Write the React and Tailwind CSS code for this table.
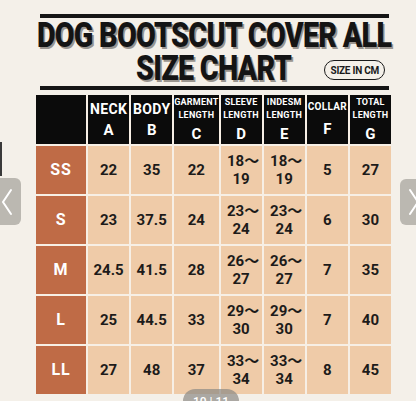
import React from "react";

const COLS = [
  { top: ["NECK"], big: true, letter: "A" },
  { top: ["BODY"], big: true, letter: "B" },
  { top: ["GARMENT", "LENGTH"], letter: "C" },
  { top: ["SLEEVE", "LENGTH"], letter: "D" },
  { top: ["INDESM", "LENGTH"], letter: "E" },
  { top: ["COLLAR"], mid: true, letter: "F" },
  { top: ["TOTAL", "LENGTH"], letter: "G" },
];

const ROWS = [
  { size: "SS", vals: ["22", "35", "22", ["18～", "19"], ["18～", "19"], "5", "27"] },
  { size: "S", vals: ["23", "37.5", "24", ["23～", "24"], ["23～", "24"], "6", "30"] },
  { size: "M", vals: ["24.5", "41.5", "28", ["26～", "27"], ["26～", "27"], "7", "35"] },
  { size: "L", vals: ["25", "44.5", "33", ["29～", "30"], ["29～", "30"], "7", "40"] },
  { size: "LL", vals: ["27", "48", "37", ["33～", "34"], ["33～", "34"], "8", "45"] },
];

const font = { fontFamily: "Roboto, 'Noto Sans CJK JP', sans-serif" };

const HeaderCell = ({ col }) => (
  <div className="bg-[#0b0b0b] text-white flex flex-col items-center justify-center font-bold leading-none">
    {col.big ? (
      <span className="text-[14px] tracking-wide">{col.top[0]}</span>
    ) : col.mid ? (
      <span className="text-[10px] tracking-wide mb-[3px]">{col.top[0]}</span>
    ) : (
      <div className="flex flex-col items-center gap-[4px] text-[9px] tracking-wide">
        {col.top.map((t) => (
          <span key={t}>{t}</span>
        ))}
      </div>
    )}
    <span className="text-[15px] mt-[7px]">{col.letter}</span>
  </div>
);

const ValueCell = ({ v }) => (
  <div className="bg-[#efcba8] text-[#1d1b1a] flex flex-col items-center justify-center font-bold text-[15px]">
    {Array.isArray(v) ? (
      <>
        <span className="leading-[18px] pl-[4px]">{v[0]}</span>
        <span className="leading-[18px]">{v[1]}</span>
      </>
    ) : (
      <span>{v}</span>
    )}
  </div>
);

export default function App() {
  return (
    <div className="relative w-[416px] h-[401px] overflow-hidden bg-[#f4f0e9]" style={font}>
      <div className="pl-[36px] pt-[14px] w-[392px] flex flex-col items-center">
        <div className="w-[349px] h-[4px] bg-[#151515]" />
        <div className="h-[34px] pt-[2px] flex items-center justify-center">
          <span className="inline-block text-[35px] leading-[30px] font-black tracking-tight text-[#141414] whitespace-nowrap scale-x-[0.82] [text-shadow:2px_2px_0_#9a958f]">
            DOG BOOTSCUT COVER ALL
          </span>
        </div>
        <div className="relative w-full h-[34px] flex items-center justify-center">
          <span className="inline-block text-[35px] leading-[30px] font-black tracking-tight text-[#141414] whitespace-nowrap scale-x-[0.82] [text-shadow:2px_2px_0_#9a958f]">
            SIZE CHART
          </span>
          <div className="absolute right-[7px] top-[8px] h-[20px] px-[5px] rounded-full border-[1.5px] border-[#1a1a1a] flex items-center text-[10px] font-bold text-[#1a1a1a] tracking-tight">
            SIZE IN CM
          </div>
        </div>
        <div className="w-[349px] h-[4px] bg-[#151515]" />
      </div>

      <div className="ml-[36px] mt-[5px] w-[355px] grid grid-cols-[50px_repeat(7,1fr)] grid-rows-[49px_repeat(5,48px)] gap-[2px] bg-[#f7efe5]">
        <div className="bg-[#0b0b0b]" />
        {COLS.map((c) => (
          <HeaderCell key={c.letter} col={c} />
        ))}
        {ROWS.map((r) => (
          <React.Fragment key={r.size}>
            <div className="bg-[#bf6b46] text-white flex items-center justify-center font-bold text-[16px] tracking-wider">
              {r.size}
            </div>
            {r.vals.map((v, i) => (
              <ValueCell key={i} v={v} />
            ))}
          </React.Fragment>
        ))}
      </div>

      <div className="absolute left-0 top-[142px] w-[2px] h-[34px] bg-[#3a3a3a]" />

      <div className="absolute left-[-7px] top-[178px] w-[28px] h-[47px] rounded-md bg-[#b5b1ab]/90 flex items-center justify-center">
        <svg width="12" height="28" viewBox="0 0 12 28" fill="none" stroke="white" strokeWidth="2" strokeLinecap="round">
          <path d="M10 2 L2 14 L10 26" />
        </svg>
      </div>
      <div className="absolute left-[400px] top-[179px] w-[28px] h-[46px] rounded-md bg-[#b5b1ab]/90 flex items-center justify-center">
        <svg width="12" height="28" viewBox="0 0 12 28" fill="none" stroke="white" strokeWidth="2" strokeLinecap="round">
          <path d="M2 2 L10 14 L2 26" />
        </svg>
      </div>

      <div className="absolute left-[183px] top-[389px] w-[56px] h-[24px] rounded-full bg-[#8c8985]/70 flex justify-center pt-[4px] text-white text-[12px] font-medium">
        10 | 11
      </div>
    </div>
  );
}
